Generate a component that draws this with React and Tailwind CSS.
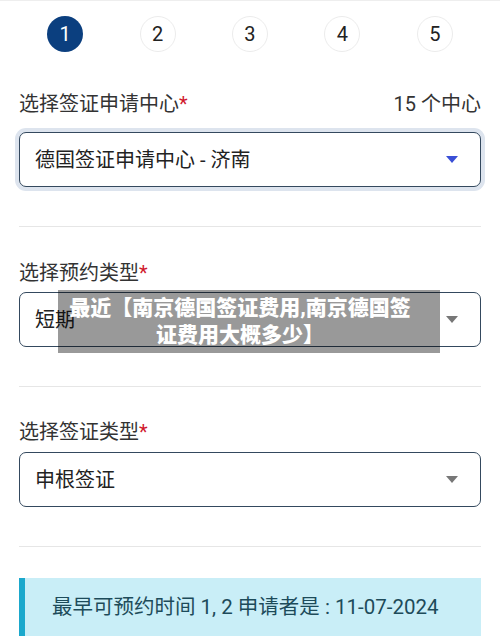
const FONT = { fontFamily: 'Roboto, "Noto Sans CJK SC", sans-serif' };

function Arrow({ color }) {
  return (
    <svg width="12" height="7" viewBox="0 0 12 7" className="shrink-0">
      <path d="M0 0 L12 0 L6 7 Z" fill={color} />
    </svg>
  );
}

function Field({ label, value, extra, active, labelClass }) {
  return (
    <div>
      <div className={"flex items-center justify-between text-[20px] leading-[26px] text-[#333] " + labelClass}>
        <span>
          {label}
          <span className="text-[#d0192c]">*</span>
        </span>
        {extra && <span className="text-[#333]">{extra}</span>}
      </div>
      <div
        className={
          "flex h-[55px] items-center justify-between rounded-[7px] border-[1.5px] border-[#34495e] bg-white pl-[15px] pr-[22px] " +
          (active ? "shadow-[0_0_0_4px_#dde4ee]" : "")
        }
      >
        <span className="text-[20px] text-[#222]">{value}</span>
        <Arrow color={active ? "#3a4fd6" : "#777"} />
      </div>
    </div>
  );
}

export default function App() {
  const steps = [1, 2, 3, 4, 5];

  return (
    <div className="relative h-[642px] w-[500px] overflow-hidden border-t border-[#eee] bg-white" style={FONT}>
      <div className="px-[19px]">
        <div className="flex justify-around pt-[15px]">
          {steps.map((n) => (
            <div
              key={n}
              className={
                "flex h-9 w-9 items-center justify-center rounded-full text-[20px] " +
                (n === 1
                  ? "bg-[#0b3f7f] text-white"
                  : "border-[1.5px] border-[#ececec] bg-white text-[#222]")
              }
            >
              {n}
            </div>
          ))}
        </div>

        <Field
          label="选择签证申请中心"
          extra="15 个中心"
          value="德国签证申请中心 - 济南"
          active
          labelClass="mt-[39px] mb-[15px]"
        />
        <div className="mt-[39px] h-px bg-[#e6e6e6]" />

        <Field label="选择预约类型" value="短期" labelClass="mt-[33px] mb-[6px]" />
        <div className="mt-[39px] h-px bg-[#e6e6e6]" />

        <Field label="选择签证类型" value="申根签证" labelClass="mt-[32px] mb-[7px]" />
        <div className="mt-[39px] h-px bg-[#e6e6e6]" />

        <div className="mt-[31px] flex h-[58px] items-center border-l-[6px] border-[#1ba8cc] bg-[#c9eef7] pl-[27px] text-[20.5px] text-[#1d4b5a]">
          最早可预约时间 1, 2 申请者是 : 11-07-2024
        </div>
      </div>

      <div className="absolute left-[58px] top-[289px] flex h-[63px] w-[382px] items-center justify-center bg-black/40 pr-[18px] text-center text-[21px] font-black leading-[27px] text-white">
        <div>
          最近【南京德国签证费用,南京德国签
          <br />
          证费用大概多少】
        </div>
      </div>
    </div>
  );
}
